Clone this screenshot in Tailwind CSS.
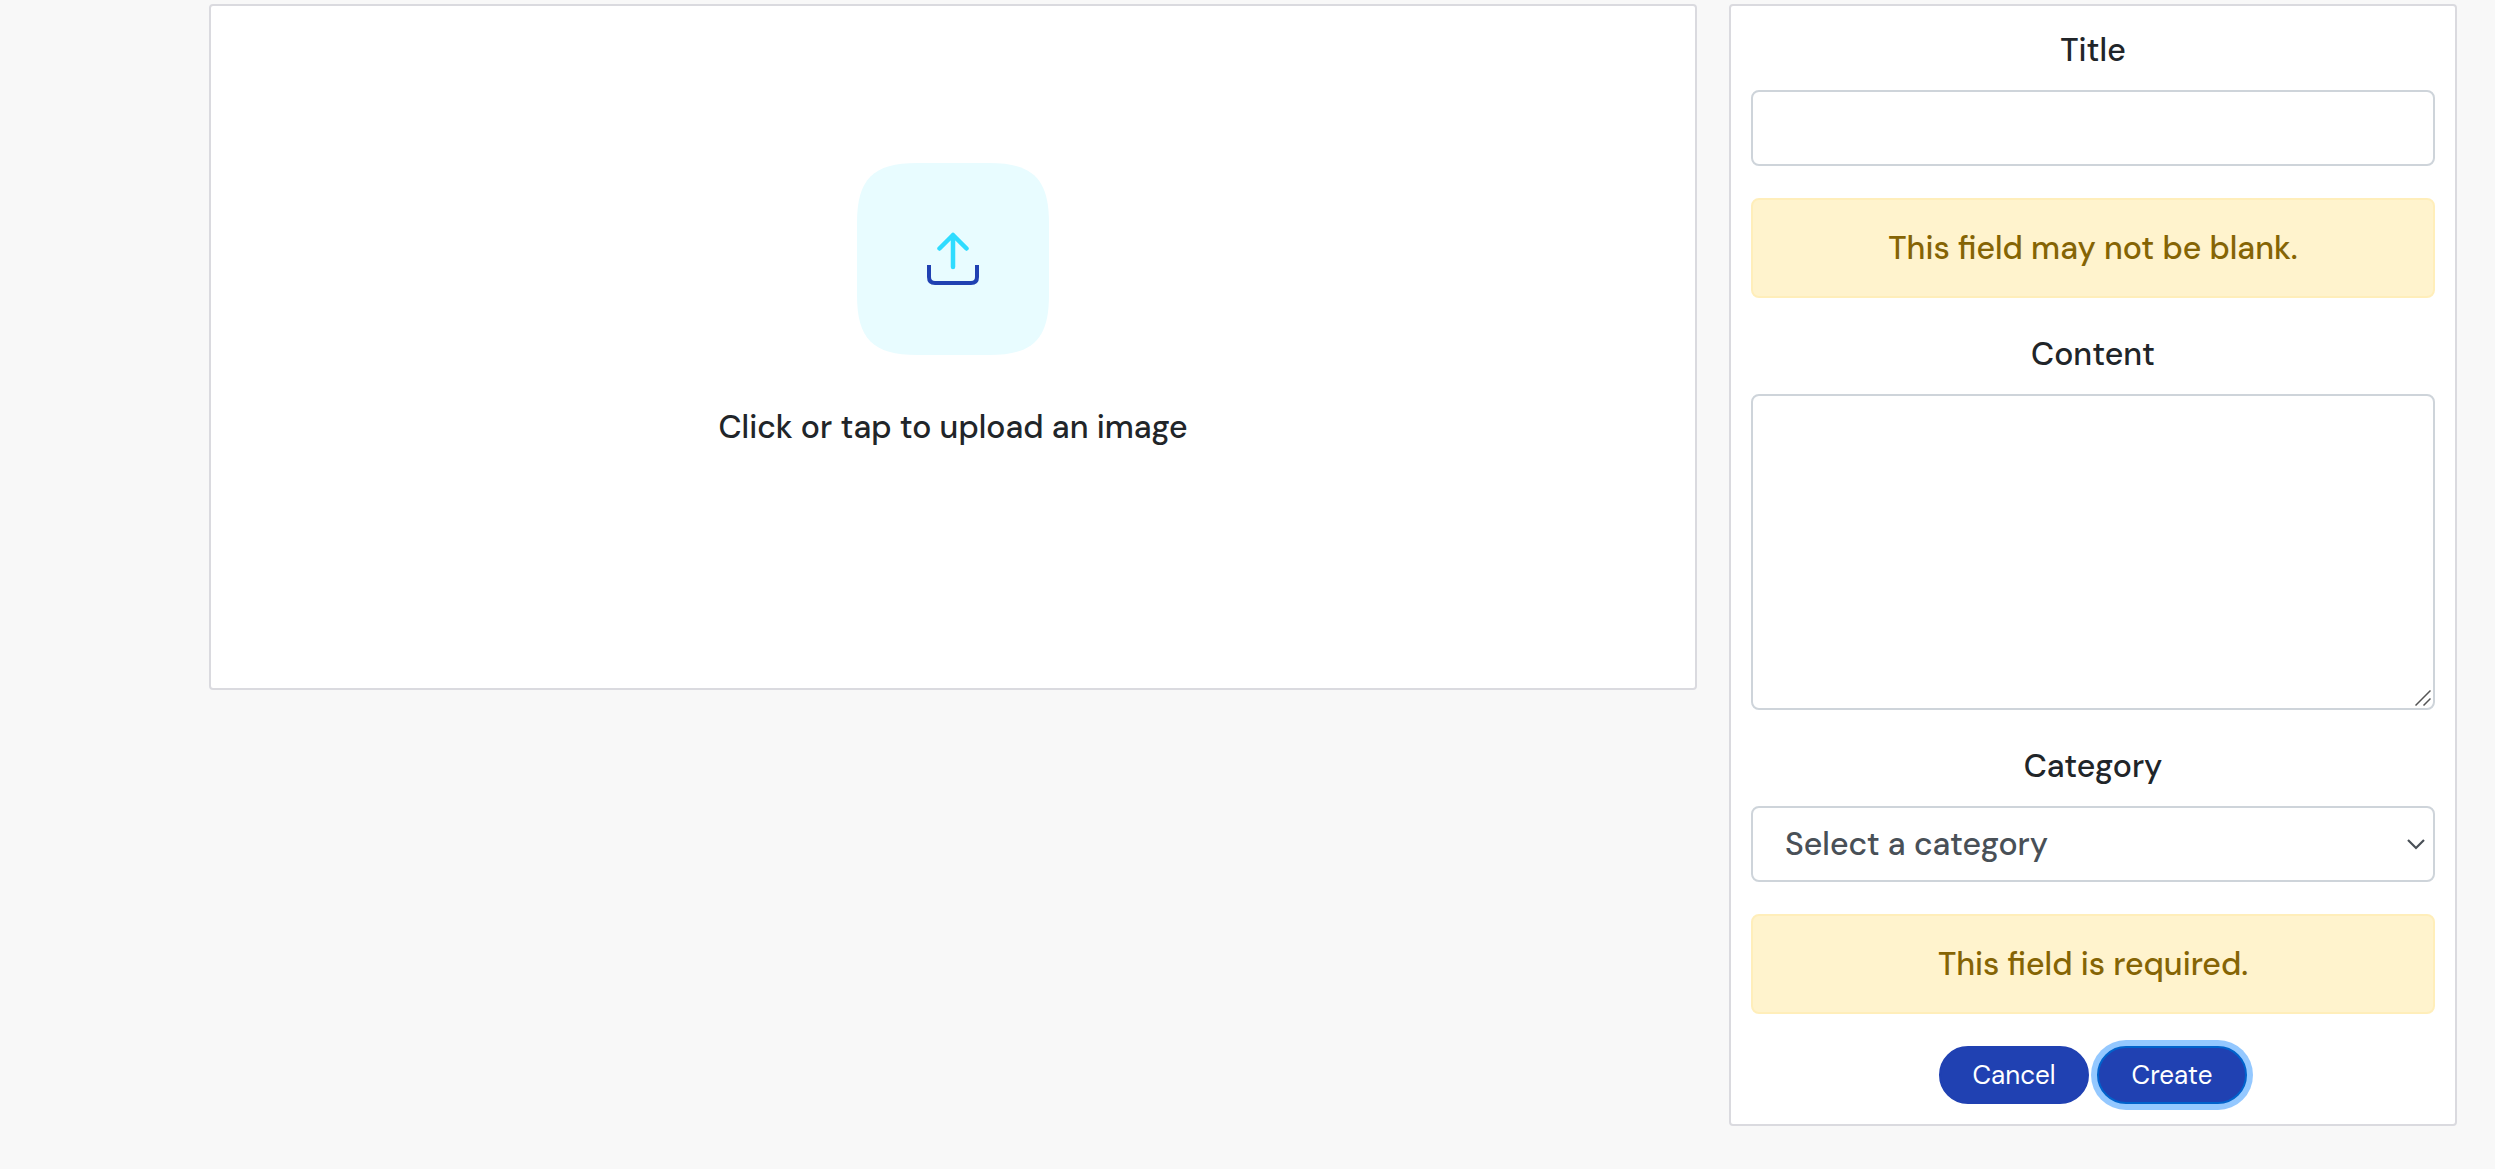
<!DOCTYPE html>
<html lang="en">
<head>
<meta charset="utf-8">
<meta name="viewport" content="width=device-width, initial-scale=1">
<title>Create post</title>
<script src="https://cdn.jsdelivr.net/npm/@tailwindcss/browser@4"></script>
</head>
<body class="min-h-screen bg-[#f8f8f8] font-['DM_Sans','Inter',sans-serif] text-[32px] leading-[48px] font-medium text-[#212529]">
<form class="flex items-start pt-1 pr-[22px] pb-10 pl-[193px]">
  <div class="w-2/3 px-4">
    <div class="rounded-[4px] border-2 border-[#dadadf] bg-white px-5 pt-[157px] pb-[237px]">
      <label for="image" class="flex cursor-pointer flex-col items-center gap-12">
        <svg class="size-48" viewBox="0 0 192 192" fill="none" aria-hidden="true">
          <path d="M0 60C0 16 16 0 60 0H132C176 0 192 16 192 60V132C192 176 176 192 132 192H60C16 192 0 176 0 132Z" fill="#e8fcff"/>
          <path d="M96 104V72M82.500 85.500L96 72L109.500 85.500" stroke="#2fdcff" stroke-width="4.500" stroke-linecap="round" stroke-linejoin="round"/>
          <path d="M72 102V114Q72 120 78 120H114Q120 120 120 114V102" stroke="#2041b2" stroke-width="4"/>
        </svg>
        <span>Click or tap to upload an image</span>
      </label>
      <input id="image" type="file" accept="image/*" class="sr-only">
    </div>
  </div>
  <div class="w-1/3 px-4">
    <div class="flex flex-col gap-8 rounded-[4px] border-2 border-[#dadadf] bg-white p-5 text-center">
      <div class="flex flex-col gap-4">
        <label for="title">Title</label>
        <input id="title" type="text" class="h-[76px] w-full rounded-lg border-2 border-[#ced4da] bg-white px-8 text-left outline-none">
      </div>
      <div role="alert" class="rounded-lg border-2 border-[#ffeeba] bg-[#fff3cd] px-10 py-6 text-[#856404]">This field may not be blank.</div>
      <div class="flex flex-col gap-4">
        <label for="content">Content</label>
        <div class="relative flex">
          <textarea id="content" class="h-[316px] w-full resize-none rounded-lg border-2 border-[#ced4da] bg-white px-8 py-3 text-left outline-none"></textarea>
          <svg class="pointer-events-none absolute right-1 bottom-1 size-4" viewBox="0 0 16 16" stroke="#555" stroke-width="1.500" aria-hidden="true"><path d="M0.500 15.500L15.500 0.500M8.500 15.500L15.500 8.500"/></svg>
        </div>
      </div>
      <div class="flex flex-col gap-4">
        <label for="category">Category</label>
        <div class="relative flex">
          <select id="category" class="h-[76px] w-full appearance-none rounded-lg border-2 border-[#ced4da] bg-white px-8 text-left text-[#495057] outline-none">
            <option>Select a category</option>
          </select>
          <svg class="pointer-events-none absolute top-[33px] right-[10px] h-[11px] w-[18px]" viewBox="0 0 18 11" fill="none" stroke="#495057" stroke-width="2.200" aria-hidden="true"><path d="M1 1L9 9L17 1"/></svg>
        </div>
      </div>
      <div role="alert" class="rounded-lg border-2 border-[#ffeeba] bg-[#fff3cd] px-10 py-6 text-[#856404]">This field is required.</div>
      <div class="flex justify-center gap-2 text-[26px] leading-8 font-normal text-white">
        <button type="button" class="h-[58px] w-[150px] cursor-pointer rounded-full border-2 border-[#2041b2] bg-[#2041b2]">Cancel</button>
        <button type="submit" class="h-[58px] w-[150px] cursor-pointer rounded-full border-2 border-[#0062cc] bg-[#2041b2] ring-6 ring-[#94c8ff]">Create</button>
      </div>
    </div>
  </div>
</form>
</body>
</html>
